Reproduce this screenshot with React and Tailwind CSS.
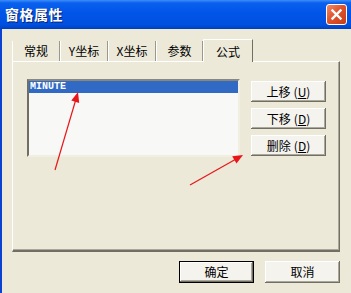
import React from "react";

const cjk = "font-['SimSun','Noto_Sans_CJK_SC',sans-serif]";

function Btn({ children, def = false, className = "" }) {
  const inner = (
    <div className="w-full h-full flex items-center justify-center bg-[#F4F3EE] text-[12px] text-black shadow-[inset_-1px_-1px_0_#716f64,inset_1px_1px_0_#ffffff,inset_-2px_-2px_0_#aca899]">
      {children}
    </div>
  );
  if (def) {
    return <div className={`border border-black ${className}`}>{inner}</div>;
  }
  return <div className={className}>{inner}</div>;
}

function Tab({ label, w, selected }) {
  if (selected) {
    return (
      <div
        className={`relative z-10 -mb-px ${w} h-[23px] flex items-start justify-center pt-[3px] bg-[#ECE9D8] border-l border-t border-white border-r border-r-[#716F64] text-[12px]`}
      >
        {label}
      </div>
    );
  }
  return (
    <div
      className={`${w} h-[20px] flex items-center justify-center border-l border-white border-r border-r-[#9A988C] text-[12px]`}
    >
      {label}
    </div>
  );
}

export default function App() {
  return (
    <div
      className={`relative w-[351px] h-[293px] overflow-hidden bg-[#ECE9D8] flex flex-col ${cjk}`}
    >
      {/* title bar */}
      <div className="h-[29px] shrink-0 flex items-center justify-between pl-[5px] pr-[4px] bg-[linear-gradient(to_bottom,#3d8ff8_0%,#0a60ee_10%,#0055e8_45%,#0050e0_85%,#003fc0_100%)]">
        <span className="text-white font-bold text-[14px] tracking-[0.5px] [text-shadow:1px_1px_0_#0a246a]">
          窗格属性
        </span>
        <div className="w-[21px] h-[21px] rounded-[3px] border border-white bg-[linear-gradient(135deg,#f08a6a_0%,#e0542c_45%,#c73b16_100%)] flex items-center justify-center">
          <svg width="13" height="13" viewBox="0 0 13 13">
            <path
              d="M2.5 2.5 L10.5 10.5 M10.5 2.5 L2.5 10.5"
              stroke="#ffffff"
              strokeWidth="2.4"
              strokeLinecap="square"
            />
          </svg>
        </div>
      </div>

      {/* client */}
      <div className="flex-1 flex flex-col border-l-2 border-[#0B42D0] pl-[10px] pr-[11px] pt-[10px]">
        {/* tabs */}
        <div className="flex items-end h-[22px]">
          <Tab label="常规" w="w-[48px]" />
          <Tab label="Y坐标" w="w-[48px]" />
          <Tab label="X坐标" w="w-[48px]" />
          <Tab label="参数" w="w-[47px]" />
          <Tab label="公式" w="w-[50px]" selected />
        </div>

        {/* panel */}
        <div className="h-[191px] border-l border-t border-white border-r border-r-[#716F64] border-b-2 border-b-[#716F64] shadow-[inset_-1px_-1px_0_#aca899] flex pl-[14px] pt-[17px]">
          {/* listbox */}
          <div className="w-[213px] h-[78px] border-2 border-t-[#8a877c] border-l-[#716F64] border-r-[#F1EFE2] border-b-[#F1EFE2] bg-[#F8F8F6]">
            <div className="h-[12px] bg-[#316AC5] flex items-center pl-[1px]">
              <span className="font-['Liberation_Mono',monospace] font-bold text-[10px] leading-none text-white">
                MINUTE
              </span>
            </div>
          </div>

          {/* side buttons */}
          <div className="ml-[11px] pt-[2px] flex flex-col gap-[6px]">
            <Btn className="w-[75px] h-[21px]">
              上移<span className="ml-[3px]">(<u>U</u>)</span>
            </Btn>
            <Btn className="w-[75px] h-[21px]">
              下移<span className="ml-[3px]">(<u>D</u>)</span>
            </Btn>
            <Btn className="w-[75px] h-[21px]">
              删除<span className="ml-[3px]">(<u>D</u>)</span>
            </Btn>
          </div>
        </div>

        {/* bottom buttons */}
        <div className="flex justify-end gap-[11px] pt-[9px]">
          <Btn def className="w-[75px] h-[22px]">确定</Btn>
          <Btn className="w-[75px] h-[22px]">取消</Btn>
        </div>
      </div>

      {/* annotation arrows */}
      <svg
        className="absolute inset-0 pointer-events-none"
        width="351"
        height="293"
        viewBox="0 0 351 293"
      >
        <line x1="55" y1="170" x2="76" y2="99" stroke="#E8161A" strokeWidth="1.2" />
        <polygon points="78,92 79.2,103 71.3,100.6" fill="#E8161A" />
        <line x1="190" y1="185" x2="237" y2="158.5" stroke="#E8161A" strokeWidth="1.2" />
        <polygon points="243,155 236.5,163.6 232.2,156.2" fill="#E8161A" />
      </svg>
    </div>
  );
}
